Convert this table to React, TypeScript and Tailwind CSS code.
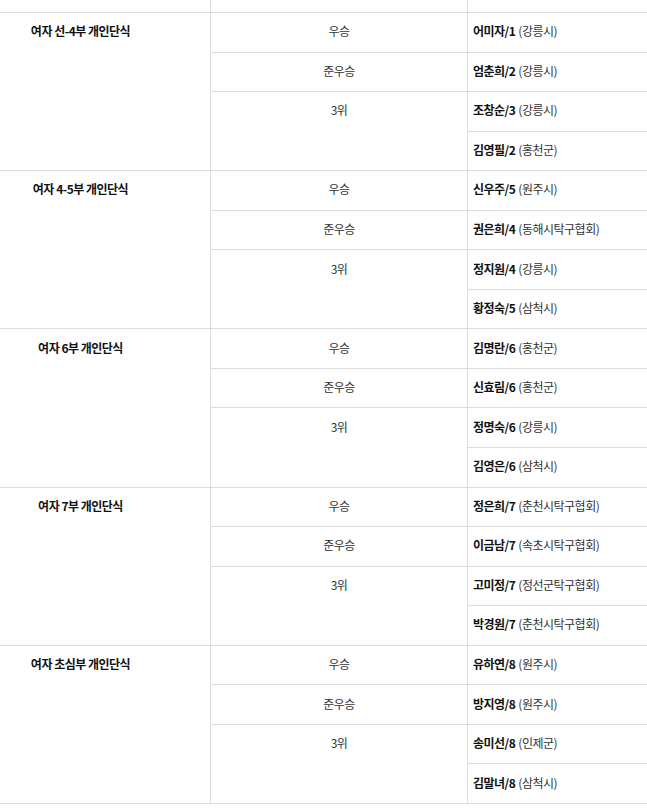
type Winner = { name: string; region: string };
type Group = { title: string; winners: Winner[] };

const groups: Group[] = [
  {
    title: "여자 선-4부 개인단식",
    winners: [
      { name: "어미자/1", region: "(강릉시)" },
      { name: "엄춘희/2", region: "(강릉시)" },
      { name: "조창순/3", region: "(강릉시)" },
      { name: "김영필/2", region: "(홍천군)" },
    ],
  },
  {
    title: "여자 4-5부 개인단식",
    winners: [
      { name: "신우주/5", region: "(원주시)" },
      { name: "권은희/4", region: "(동해시탁구협회)" },
      { name: "정지원/4", region: "(강릉시)" },
      { name: "황정숙/5", region: "(삼척시)" },
    ],
  },
  {
    title: "여자 6부 개인단식",
    winners: [
      { name: "김명란/6", region: "(홍천군)" },
      { name: "신효림/6", region: "(홍천군)" },
      { name: "정명숙/6", region: "(강릉시)" },
      { name: "김영은/6", region: "(삼척시)" },
    ],
  },
  {
    title: "여자 7부 개인단식",
    winners: [
      { name: "정은희/7", region: "(춘천시탁구협회)" },
      { name: "이금남/7", region: "(속초시탁구협회)" },
      { name: "고미정/7", region: "(정선군탁구협회)" },
      { name: "박경원/7", region: "(춘천시탁구협회)" },
    ],
  },
  {
    title: "여자 초심부 개인단식",
    winners: [
      { name: "유하연/8", region: "(원주시)" },
      { name: "방지영/8", region: "(원주시)" },
      { name: "송미선/8", region: "(인제군)" },
      { name: "김말녀/8", region: "(삼척시)" },
    ],
  },
];

function ResultGroup({ group }: { group: Group }) {
  return (
    <div className="grid h-[158.2px] grid-cols-[210px_257px_1fr] border-b border-[#dddddd]">
      {/* 종목 */}
      <div className="pr-[49px] text-center font-bold text-[#111111]">
        <div className="flex h-[38.55px] items-center justify-center pb-[2px]">{group.title}</div>
      </div>

      {/* 순위 */}
      <div className="flex flex-col border-l border-[#dddddd] text-center text-[#333333]">
        <div className="flex h-[39.55px] shrink-0 items-center justify-center border-b border-[#dddddd] pb-[2px]">우승</div>
        <div className="flex h-[39.55px] shrink-0 items-center justify-center border-b border-[#dddddd] pb-[2px]">준우승</div>
        <div className="flex-1">
          <div className="flex h-[38.55px] items-center justify-center pb-[2px]">3위</div>
        </div>
      </div>

      {/* 입상자 */}
      <div className="flex flex-col border-l border-[#dddddd]">
        {group.winners.map((w, i) => (
          <div
            key={w.name}
            className={
              i < 3
                ? "flex h-[39.55px] shrink-0 items-center border-b border-[#dddddd] pb-[2px] pl-[5px]"
                : "flex flex-1 items-center pb-[2px] pl-[5px]"
            }
          >
            <span className="font-bold text-[#111111]">{w.name}</span>
            <span className="ml-[3px] text-[#333333]">{w.region}</span>
          </div>
        ))}
      </div>
    </div>
  );
}

export default function App() {
  return (
    <div className="h-[810px] w-[647px] overflow-hidden bg-white font-['Noto_Sans_CJK_KR','Noto_Sans',sans-serif] text-[12px] tracking-[-0.5px]">
      {/* 앞 행의 끝부분 */}
      <div className="grid h-[13px] grid-cols-[210px_257px_1fr] border-b border-[#dddddd]">
        <div />
        <div className="border-l border-[#dddddd]" />
        <div className="border-l border-[#dddddd]" />
      </div>
      {groups.map((g) => (
        <ResultGroup key={g.title} group={g} />
      ))}
    </div>
  );
}
